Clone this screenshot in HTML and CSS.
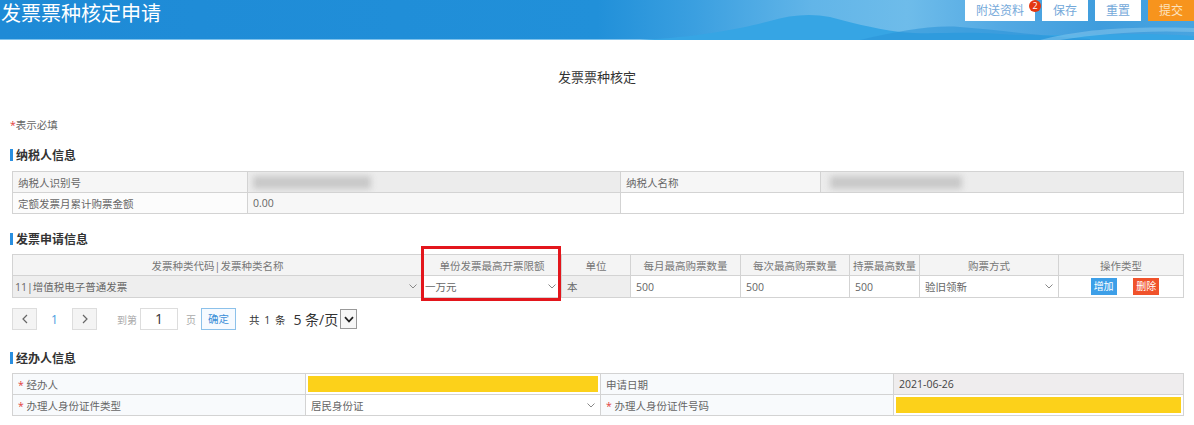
FILE: index.html
```html
<!DOCTYPE html>
<html lang="zh-CN">
<head>
  <meta charset="UTF-8">
  <title>发票票种核定申请</title>
  <link rel="stylesheet" href="styles.css">
</head>
<body>
<header class="topbar">
  <svg class="topbar-hills" viewBox="0 0 1194 40" preserveAspectRatio="none">
    <path d="M640 40 C700 37 740 29 770 21 C790 15 810 13 830 17 C850 22 870 28 900 32 C930 35 960 31 1000 34 C1060 38 1120 31 1194 36 L1194 40 Z" fill="#36a5e4"/>
    <path d="M860 40 C900 31 930 25 960 27 C1000 30 1040 36 1090 39 L1090 40 Z" fill="#2b94d8" opacity="0.6"/>
    <path d="M1040 40 C1080 30 1120 26 1194 28 L1194 32 C1140 30 1100 34 1060 40 Z" fill="#8ccaee" opacity="0.5"/>
  </svg>
  <h1 class="topbar-title">发票票种核定申请</h1>
  <div class="topbar-actions">
    <a class="btn-top" href="#">附送资料<span class="badge">2</span></a>
    <a class="btn-top" href="#">保存</a>
    <a class="btn-top" href="#">重置</a>
    <a class="btn-top btn-submit" href="#">提交</a>
  </div>
</header>

<div class="page">
  <h2 class="page-title">发票票种核定</h2>
  <p class="required-tip"><span class="star">*</span>表示必填</p>

  <!-- 纳税人信息 -->
  <h3 class="section-title">纳税人信息</h3>
  <table class="grid taxpayer">
    <colgroup>
      <col style="width:235px"><col style="width:373px"><col style="width:200px"><col>
    </colgroup>
    <tr class="row-off">
      <td class="lbl">纳税人识别号</td>
      <td class="val"><span class="blur blur-id"></span></td>
      <td class="lbl">纳税人名称</td>
      <td class="val"><span class="blur blur-name"></span></td>
    </tr>
    <tr>
      <td class="lbl lbl-white">定额发票月累计购票金额</td>
      <td class="val val-light">0.00</td>
      <td colspan="2" class="empty"></td>
    </tr>
  </table>

  <!-- 发票申请信息 -->
  <h3 class="section-title section-gap">发票申请信息</h3>
  <div class="grid-wrap">
    <table class="grid invoice">
      <colgroup>
        <col style="width:410px"><col style="width:139px"><col style="width:69px"><col style="width:110px">
        <col style="width:109px"><col style="width:70px"><col style="width:139px"><col>
      </colgroup>
      <tr class="head">
        <th>发票种类代码|发票种类名称</th>
        <th>单份发票最高开票限额</th>
        <th>单位</th>
        <th>每月最高购票数量</th>
        <th>每次最高购票数量</th>
        <th>持票最高数量</th>
        <th>购票方式</th>
        <th>操作类型</th>
      </tr>
      <tr>
        <td class="off">
          <div class="select">11|增值税电子普通发票<svg class="chev" viewBox="0 0 8 5"><path d="M.5.5 4 4 7.5.5" fill="none" stroke="#888"/></svg></div>
        </td>
        <td>
          <div class="select">一万元<svg class="chev" viewBox="0 0 8 5"><path d="M.5.5 4 4 7.5.5" fill="none" stroke="#888"/></svg></div>
        </td>
        <td class="off">本</td>
        <td>500</td>
        <td>500</td>
        <td>500</td>
        <td>
          <div class="select">验旧领新<svg class="chev" viewBox="0 0 8 5"><path d="M.5.5 4 4 7.5.5" fill="none" stroke="#888"/></svg></div>
        </td>
        <td class="ops">
          <a class="op-btn op-add" href="#">增加</a>
          <a class="op-btn op-del" href="#">删除</a>
        </td>
      </tr>
    </table>
    <div class="mark"></div>
  </div>

  <div class="pager">
    <span class="pg-btn"><svg viewBox="0 0 6 10"><path d="M5 1 1 5 5 9" fill="none" stroke="#666" stroke-width="1.2"/></svg></span>
    <span class="pg-num">1</span>
    <span class="pg-btn"><svg viewBox="0 0 6 10"><path d="M1 1 5 5 1 9" fill="none" stroke="#666" stroke-width="1.2"/></svg></span>
    <span class="pg-text pg-goto">到第</span>
    <span class="pg-input">1</span>
    <span class="pg-text">页</span>
    <span class="pg-ok">确定</span>
    <span class="pg-total">共 1 条</span>
    <span class="pg-size">5 条/页</span>
    <span class="pg-arrow"><svg viewBox="0 0 10 7"><path d="M1 1.2 5 5.5 9 1.2" fill="none" stroke="#222" stroke-width="1.8"/></svg></span>
  </div>

  <!-- 经办人信息 -->
  <h3 class="section-title section-gap2">经办人信息</h3>
  <table class="grid agent">
    <colgroup>
      <col style="width:293px"><col style="width:295px"><col style="width:293px"><col>
    </colgroup>
    <tr>
      <td class="lbl-soft"><span class="star">*</span> 经办人</td>
      <td class="yellow"></td>
      <td class="lbl-soft">申请日期</td>
      <td class="date">2021-06-26</td>
    </tr>
    <tr>
      <td class="lbl-soft"><span class="star">*</span> 办理人身份证件类型</td>
      <td>
        <div class="select">居民身份证<svg class="chev" viewBox="0 0 8 5"><path d="M.5.5 4 4 7.5.5" fill="none" stroke="#888"/></svg></div>
      </td>
      <td class="lbl-soft"><span class="star">*</span> 办理人身份证件号码</td>
      <td class="yellow"></td>
    </tr>
  </table>
</div>
</body>
</html>
```

FILE: styles.css
```css
* {
  margin: 0;
  padding: 0;
  box-sizing: border-box;
}

body {
  font-family: "Open Sans", "Noto Sans CJK SC", sans-serif;
  font-size: 10.5px;
  color: #666;
  background: #fff;
}

a {
  text-decoration: none;
}

/* top bar */
.topbar {
  position: relative;
  height: 40px;
  display: flex;
  justify-content: space-between;
  align-items: flex-start;
  background: linear-gradient(90deg, #1e8ad6 0%, #2190d9 50%, #3a9fe0 58%, #62b5e8 68%, #6ebcea 76%, #53a9e3 84%, #3f9ddd 92%, #48a4e0 100%);
  border-bottom: 1px solid #7fc2ec;
}

.topbar-hills {
  position: absolute;
  left: 0;
  top: 0;
  width: 100%;
  height: 40px;
}

.topbar-title {
  position: relative;
  padding: 1px 0 0 1px;
  font-family: "Noto Sans CJK SC", sans-serif;
  font-size: 20px;
  font-weight: normal;
  line-height: 24px;
  color: #fff;
}

.topbar-actions {
  position: relative;
  display: flex;
  gap: 7px;
}

.btn-top {
  position: relative;
  height: 21px;
  line-height: 21px;
  padding: 0 11px;
  background: #fff;
  color: #74a9da;
  font-size: 12px;
}

.btn-submit {
  background: #f7941d;
  color: #fde3bd;
}

.badge {
  position: absolute;
  top: 0;
  right: -6px;
  width: 12px;
  height: 12px;
  border-radius: 50%;
  background: #e4380f;
  color: #fff;
  font-size: 9px;
  line-height: 12px;
  text-align: center;
}

/* page */
.page {
  padding: 0 10px;
}

.page-title {
  padding-top: 28px;
  text-align: center;
  font-size: 13px;
  font-weight: normal;
  line-height: 18px;
  color: #333;
}

.required-tip {
  margin-top: 30px;
  line-height: 18px;
  color: #666;
}

.star {
  color: #e23c3c;
}

.section-title {
  display: flex;
  align-items: center;
  height: 18px;
  margin-top: 12px;
  font-size: 12px;
  font-weight: bold;
  color: #333;
}

.section-title::before {
  content: "";
  width: 3px;
  height: 12px;
  margin-right: 3px;
  background: #2a8fe0;
}

.section-gap {
  margin-top: 16px;
}

.section-gap2 {
  margin-top: 19px;
}

/* tables */
.grid {
  width: 1172px;
  margin: 7px 0 0 2px;
  border-collapse: collapse;
  table-layout: fixed;
}

.grid td,
.grid th {
  height: 21px;
  padding: 0 5px;
  border: 1px solid #d3d3d3;
  font-weight: normal;
  text-align: left;
  white-space: nowrap;
  overflow: hidden;
  color: #666;
}

.taxpayer .lbl {
  background: #f6f6f6;
}

.taxpayer .val {
  background: #ececec;
}

.taxpayer .lbl-white {
  background: #fcfcfc;
}

.taxpayer .val-light {
  background: #f7f7f7;
}

.taxpayer .empty {
  background: #fff;
}

.blur {
  display: inline-block;
  height: 13px;
  background: #c8c8c8;
  filter: blur(3px);
  vertical-align: middle;
}

.blur-id {
  width: 118px;
}

.blur-name {
  width: 132px;
  margin-left: 4px;
}

.grid-wrap {
  position: relative;
  margin: 6px 0 0 2px;
}

.grid-wrap .grid {
  margin: 0;
}

.grid.invoice .head th {
  padding: 0 2px;
  background: #f4f4f4;
  text-align: center;
  color: #777;
}

.invoice td {
  height: 22px;
}

.invoice .off {
  background: #eeeeee;
}

.select {
  display: flex;
  justify-content: space-between;
  align-items: center;
}

.chev {
  width: 8px;
  height: 5px;
}

.grid.invoice td:first-child,
.grid.invoice td:nth-child(2) {
  padding-left: 2px;
}

.grid.invoice .ops {
  padding: 0 0 0 8px;
  text-align: center;
}

.op-btn {
  display: inline-block;
  width: 26px;
  height: 17px;
  margin: 0 7px;
  line-height: 17px;
  font-size: 10px;
  color: #fff;
  vertical-align: middle;
}

.op-add {
  background: #3d9fe8;
}

.op-del {
  background: #f0522b;
}

.mark {
  position: absolute;
  left: 409px;
  top: -8px;
  width: 140px;
  height: 55px;
  border: 3px solid #e3161c;
}

/* pager */
.pager {
  display: flex;
  align-items: center;
  height: 22px;
  margin-top: 10px;
  padding-left: 2px;
}

.pg-btn {
  display: flex;
  align-items: center;
  justify-content: center;
  width: 25px;
  height: 22px;
  border: 1px solid #ddd;
  background: #f4f4f4;
}

.pg-btn svg {
  width: 6px;
  height: 10px;
}

.pg-num {
  width: 35px;
  text-align: center;
  color: #4a9de0;
  font-size: 12px;
}

.pg-text {
  color: #aaa;
  font-size: 10px;
}

.pg-goto {
  margin-left: 20px;
}

.pg-input {
  width: 38px;
  height: 22px;
  margin: 0 8px 0 3px;
  border: 1px solid #ddd;
  text-align: center;
  line-height: 20px;
  font-size: 14px;
  color: #333;
}

.pg-ok {
  height: 22px;
  margin-left: 5px;
  padding: 0 6px;
  border: 1px solid #8cc1ea;
  background: #f6faff;
  color: #3a8fd8;
  line-height: 20px;
}

.pg-total {
  margin-left: 13px;
  letter-spacing: 1px;
  color: #333;
}

.pg-size {
  margin-left: 7px;
  font-size: 14px;
  color: #333;
}

.pg-arrow {
  display: flex;
  align-items: center;
  justify-content: center;
  width: 17px;
  height: 20px;
  margin-left: 2px;
  border: 1px solid #999;
  background: #f7f7f7;
}

.pg-arrow svg {
  width: 10px;
  height: 7px;
}

/* agent table */
.agent {
  margin-top: 6px;
}

.agent .lbl-soft {
  background: #f8fafc;
}

.agent .yellow {
  background: #fcd11a;
  box-shadow: inset 0 0 0 2px #fff;
}

.agent .date {
  background: #efedee;
  color: #444;
}
```
